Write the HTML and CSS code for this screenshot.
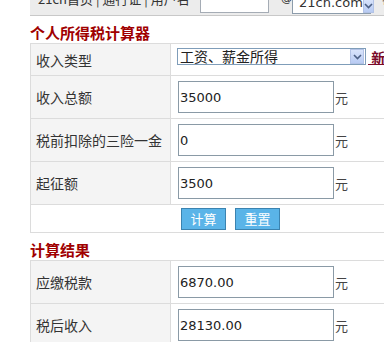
FILE: index.html
```html
<!DOCTYPE html>
<html>
<head>
<meta charset="utf-8">
<link rel="stylesheet" href="styles.css">
</head>
<body>
<div class="page">
  <div class="topbar">
    <div class="topbar-inner">
      <span class="nav">21cn首页 | 通行证 | 用户名</span>
      <span class="userbox"></span>
      <span class="at">@</span>
      <span class="domain"><span class="domain-text">21cn.com</span><span class="dd-btn"><svg width="9" height="6" viewBox="0 0 9 6"><path d="M1 1 L4.5 4.5 L8 1" fill="none" stroke="#4d6185" stroke-width="1.6"/></svg></span></span>
      <span class="pw">密</span>
    </div>
  </div>

  <h2 class="title">个人所得税计算器</h2>
  <div class="form">
    <div class="row r-first">
      <div class="label">收入类型</div>
      <div class="value v-top">
        <span class="select"><span class="select-text">工资、薪金所得</span><span class="dd-btn"><svg width="9" height="6" viewBox="0 0 9 6"><path d="M1 1 L4.5 4.5 L8 1" fill="none" stroke="#4d6185" stroke-width="1.6"/></svg></span></span>
        <a class="newlink" href="#">&nbsp;新版</a>
      </div>
    </div>
    <div class="row">
      <div class="label">收入总额</div>
      <div class="value"><span class="field">35000</span><span class="unit">元</span></div>
    </div>
    <div class="row">
      <div class="label">税前扣除的三险一金</div>
      <div class="value"><span class="field">0</span><span class="unit">元</span></div>
    </div>
    <div class="row">
      <div class="label">起征额</div>
      <div class="value"><span class="field">3500</span><span class="unit">元</span></div>
    </div>
    <div class="row r-buttons">
      <button class="btn">计算</button>
      <button class="btn">重置</button>
    </div>
  </div>

  <h2 class="title title-2">计算结果</h2>
  <div class="form">
    <div class="row">
      <div class="label">应缴税款</div>
      <div class="value"><span class="field">6870.00</span><span class="unit">元</span></div>
    </div>
    <div class="row">
      <div class="label">税后收入</div>
      <div class="value"><span class="field">28130.00</span><span class="unit">元</span></div>
    </div>
  </div>
</div>
</body>
</html>
```

FILE: styles.css
```css
html, body {
  margin: 0;
  padding: 0;
  background: #fff;
  overflow: hidden;
}
body {
  font-family: "Noto Sans CJK SC", "DejaVu Sans", sans-serif;
  color: #333;
}
.page {
  padding-left: 30px;
  width: 420px;
}
.topbar {
  height: 15px;
  background: #ececec;
  border-bottom: 1px solid #c8c8c8;
  overflow: hidden;
}
.topbar-inner {
  display: flex;
  align-items: flex-end;
  height: 25px;
  margin-top: -11px;
  padding-left: 8px;
  font-size: 13px;
  color: #333;
}
.nav {
  line-height: 18px;
  margin-bottom: 6px;
  width: 162px;
  white-space: nowrap;
}
.userbox {
  width: 67px;
  height: 22px;
  background: #fff;
  border: 1px solid #a5acb5;
  margin-bottom: 1px;
}
.at {
  margin-left: 12px;
  margin-bottom: 6px;
  width: 11px;
  line-height: 18px;
  font-family: "DejaVu Sans", sans-serif;
  font-size: 11px;
}
.domain {
  display: flex;
  align-items: center;
  justify-content: space-between;
  width: 79px;
  height: 23px;
  background: #fff;
  border: 1px solid #8c9cab;
  font-family: "DejaVu Sans", sans-serif;
  font-size: 13px;
  padding-left: 6px;
  box-sizing: border-box;
}
.domain .dd-btn { margin-top: 6px; }
.domain-text { line-height: 16px; margin-top: 1px; }
.pw { margin-left: 11px; margin-bottom: 6px; line-height: 18px; }

.dd-btn {
  display: flex;
  align-items: center;
  justify-content: center;
  width: 14px;
  height: 15px;
  margin-right: 1px;
  background: linear-gradient(#d9e4fb, #b8cbf3);
  border: 1px solid #b3c3e6;
  box-sizing: border-box;
}

.title {
  margin: 6px 0 0 0;
  font-size: 15px;
  line-height: 21px;
  font-weight: bold;
  color: #a00000;
}
.title-2 { margin-top: 6px; }

.form {
  border-top: 1px solid #dcdcdc;
  border-left: 1px solid #dcdcdc;
}
.row {
  display: flex;
  height: 43px;
  box-sizing: border-box;
  border-bottom: 1px solid #dcdcdc;
}
.r-first { height: 32px; }
.label {
  width: 140px;
  box-sizing: border-box;
  padding-left: 5px;
  background: #f4f4f4;
  border-right: 1px solid #dcdcdc;
  display: flex;
  align-items: center;
  font-size: 14px;
  color: #333;
}
.value {
  flex: 1;
  display: flex;
  align-items: center;
  padding-left: 7px;
}
.v-top {
  align-items: flex-start;
  padding-top: 4px;
  padding-left: 6px;
}
.field {
  display: flex;
  align-items: center;
  width: 156px;
  height: 32px;
  box-sizing: border-box;
  border: 1px solid #8a9aa6;
  background: #fff;
  padding-left: 1px;
  font-family: "DejaVu Sans", sans-serif;
  font-size: 13px;
  color: #222;
}
.unit {
  margin-left: 1px;
  font-size: 13px;
  color: #444;
}
.select {
  display: flex;
  align-items: center;
  justify-content: space-between;
  width: 189px;
  height: 17px;
  box-sizing: border-box;
  border: 1px solid #7f9db9;
  background: #fff;
  padding-left: 2px;
}
.select-text {
  font-size: 14px;
  line-height: 15px;
  color: #222;
}
.newlink {
  margin-left: 2px;
  font-size: 14px;
  font-weight: bold;
  line-height: 19px;
  color: #7a0a2a;
  white-space: nowrap;
}
.r-buttons {
  height: 28px;
  align-items: flex-start;
  padding-top: 3px;
  padding-left: 150px;
  gap: 9px;
  background: #fff;
}
.btn {
  width: 45px;
  height: 22px;
  padding: 0;
  background: #5ab4e8;
  border: 1px solid #3b83b0;
  color: #fff;
  font-family: "Noto Sans CJK SC", sans-serif;
  font-size: 13px;
  line-height: 18px;
}
```
